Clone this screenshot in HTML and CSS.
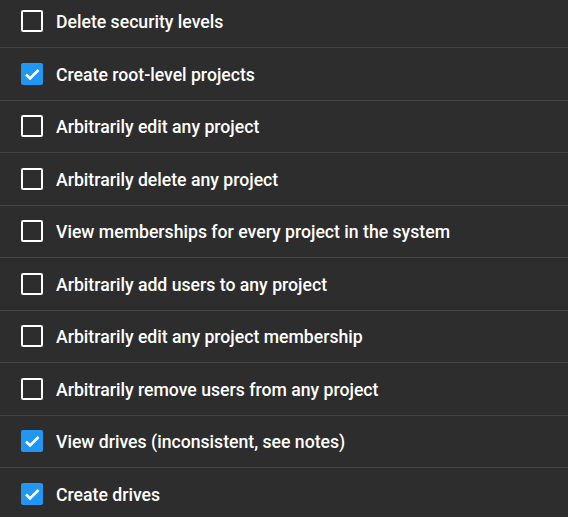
FILE: index.html
```html
<!DOCTYPE html>
<html lang="en">
<head>
  <meta charset="UTF-8" />
  <title>Permissions</title>
  <link rel="stylesheet" href="styles.css">
</head>
<body>
  <ul class="perms">
    <li class="perm"><span class="box"></span><span class="label">Delete security levels</span></li>
    <li class="perm"><span class="box checked"><svg viewBox="0 0 22 22"><path d="M5 11.5l4 4 8.5-8.5"/></svg></span><span class="label">Create root-level projects</span></li>
    <li class="perm"><span class="box"></span><span class="label">Arbitrarily edit any project</span></li>
    <li class="perm"><span class="box"></span><span class="label">Arbitrarily delete any project</span></li>
    <li class="perm"><span class="box"></span><span class="label">View memberships for every project in the system</span></li>
    <li class="perm"><span class="box"></span><span class="label">Arbitrarily add users to any project</span></li>
    <li class="perm"><span class="box"></span><span class="label">Arbitrarily edit any project membership</span></li>
    <li class="perm"><span class="box"></span><span class="label">Arbitrarily remove users from any project</span></li>
    <li class="perm"><span class="box checked"><svg viewBox="0 0 22 22"><path d="M5 11.5l4 4 8.5-8.5"/></svg></span><span class="label">View drives (inconsistent, see notes)</span></li>
    <li class="perm"><span class="box checked"><svg viewBox="0 0 22 22"><path d="M5 11.5l4 4 8.5-8.5"/></svg></span><span class="label">Create drives</span></li>
  </ul>
</body>
</html>
```

FILE: styles.css
```css
* {
  margin: 0;
  padding: 0;
  box-sizing: border-box;
}

html, body {
  background-color: #2d2d2d;
  overflow: hidden;
}

body {
  font-family: Roboto, 'Noto Sans', sans-serif;
  color: #fff;
}

.perms {
  list-style: none;
  margin-top: -4.5px;
}

.perm {
  display: flex;
  align-items: center;
  gap: 13px;
  height: 52.5px;
  padding-left: 21px;
  border-bottom: 1px solid #444;
}

.box {
  flex: none;
  width: 22px;
  height: 22px;
  border: 2px solid #fff;
  border-radius: 2px;
}

.box.checked {
  background-color: #2196f3;
  border: none;
}

.box svg {
  display: block;
  width: 22px;
  height: 22px;
  fill: none;
  stroke: #fff;
  stroke-width: 2.6;
}

.label {
  font-size: 17.65px;
  font-weight: 500;
  line-height: 20px;
  padding-top: 2px;
}
```
